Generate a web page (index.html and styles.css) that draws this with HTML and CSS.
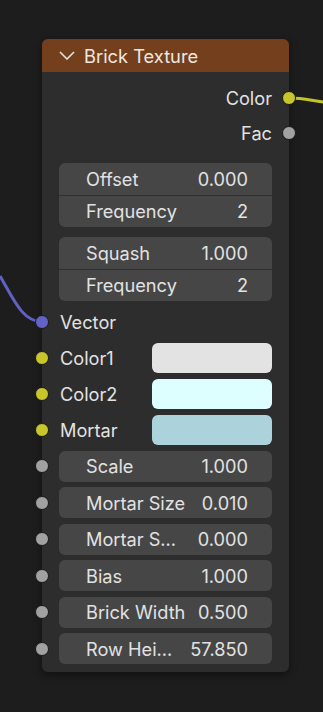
FILE: index.html
```html
<!DOCTYPE html>
<html lang="en">
<head>
    <meta charset="UTF-8">
    <meta name="viewport" content="width=device-width, initial-scale=1.0">
    <title>Brick Texture</title>
    <link rel="stylesheet" href="styles.css">
</head>
<body>
    <div class="canvas">
        <svg class="wires" width="323" height="712" viewBox="0 0 323 712">
            <path d="M289 98 C 305 98, 312 101, 323 102" stroke="#c4c42a" stroke-width="3" fill="none"/>
            <path d="M0 276 C 14 300, 22 321, 42 322" stroke="#6161c4" stroke-width="3" fill="none"/>
        </svg>
        <div class="node">
            <div class="node-header">
                <svg class="chevron" width="16" height="9" viewBox="0 0 16 9">
                    <path d="M1 1 L8 8 L15 1" stroke="#e8e2dc" stroke-width="1.6" fill="none"/>
                </svg>
                <span>Brick Texture</span>
            </div>
            <div class="node-body">
                <div class="row output"><span>Color</span><i class="socket yellow"></i></div>
                <div class="row output"><span>Fac</span><i class="socket grey"></i></div>

                <div class="group first">
                    <div class="field"><span>Offset</span><span>0.000</span></div>
                    <div class="field"><span>Frequency</span><span>2</span></div>
                </div>
                <div class="group">
                    <div class="field"><span>Squash</span><span>1.000</span></div>
                    <div class="field"><span>Frequency</span><span>2</span></div>
                </div>

                <div class="inputs">
                    <div class="row input"><i class="socket purple"></i><span>Vector</span></div>
                    <div class="row input"><i class="socket yellow"></i><span>Color1</span><div class="swatch c1"></div></div>
                    <div class="row input"><i class="socket yellow"></i><span>Color2</span><div class="swatch c2"></div></div>
                    <div class="row input"><i class="socket yellow"></i><span>Mortar</span><div class="swatch c3"></div></div>
                </div>

                <div class="values">
                    <div class="value-row"><i class="socket grey"></i><div class="field"><span>Scale</span><span>1.000</span></div></div>
                    <div class="value-row"><i class="socket grey"></i><div class="field"><span>Mortar Size</span><span>0.010</span></div></div>
                    <div class="value-row"><i class="socket grey"></i><div class="field"><span>Mortar S…</span><span>0.000</span></div></div>
                    <div class="value-row"><i class="socket grey"></i><div class="field"><span>Bias</span><span>1.000</span></div></div>
                    <div class="value-row"><i class="socket grey"></i><div class="field"><span>Brick Width</span><span>0.500</span></div></div>
                    <div class="value-row"><i class="socket grey"></i><div class="field"><span>Row Hei…</span><span>57.850</span></div></div>
                </div>
            </div>
        </div>
    </div>
</body>
</html>
```

FILE: styles.css
```css
body {
    margin: 0;
    background: #1d1d1d;
    font-family: Inter, 'Noto Sans', sans-serif;
    color: #e2e2e2;
}
.canvas {
    position: relative;
    width: 323px;
    height: 712px;
    padding: 39px 0 0 42px;
    box-sizing: border-box;
    overflow: hidden;
}
.wires {
    position: absolute;
    top: 0;
    left: 0;
}
.node {
    position: relative;
    z-index: 1;
    width: 247px;
    background: #2d2d2d;
    border-radius: 6px;
    box-shadow: 0 3px 8px rgba(0, 0, 0, 0.45);
}
.node-header {
    height: 33px;
    display: flex;
    align-items: center;
    background: #733f1c;
    border-radius: 6px 6px 0 0;
    padding-left: 17px;
    font-size: 18.3px;
    color: #eee8e2;
}
.chevron {
    margin-right: 9px;
}
.node-body {
    padding: 8px 17px 7.5px;
    font-size: 18.2px;
}
.row {
    position: relative;
    display: flex;
    align-items: center;
    height: 35px;
}
.output {
    justify-content: flex-end;
}
.socket {
    position: absolute;
    width: 12px;
    height: 12px;
    border-radius: 50%;
    border: 1px solid #1a1a1a;
    top: 50%;
    margin-top: -7px;
}
.output .socket {
    right: -24px;
}
.input .socket, .value-row .socket {
    left: -24px;
}
.yellow { background: #c7c72b; }
.grey { background: #a1a1a1; }
.purple { background: #6363c7; }
.group {
    background: #464646;
    border-radius: 6px;
    margin-top: 10px;
}
.group.first {
    margin-top: 12.5px;
}
.group .field {
    height: 32px;
    border-radius: 0;
    background: none;
}
.group .field + .field {
    border-top: 1px solid #2f2f2f;
    height: 31px;
}
.field {
    display: flex;
    align-items: center;
    justify-content: space-between;
    height: 31px;
    padding: 0 24px 0 27px;
    background: #464646;
    border-radius: 6px;
    white-space: nowrap;
}
.inputs {
    margin-top: 3px;
}
.inputs .row {
    height: 36px;
}
.input span {
    flex: 1;
    padding-left: 1px;
}
.swatch {
    width: 120px;
    height: 30px;
    border-radius: 6px;
}
.c1 { background: #e3e3e3; }
.c2 { background: #ddffff; }
.c3 { background: #acd2dc; }
.values {
    margin-top: 3px;
    display: flex;
    flex-direction: column;
    gap: 5.5px;
}
.value-row {
    position: relative;
}
```
